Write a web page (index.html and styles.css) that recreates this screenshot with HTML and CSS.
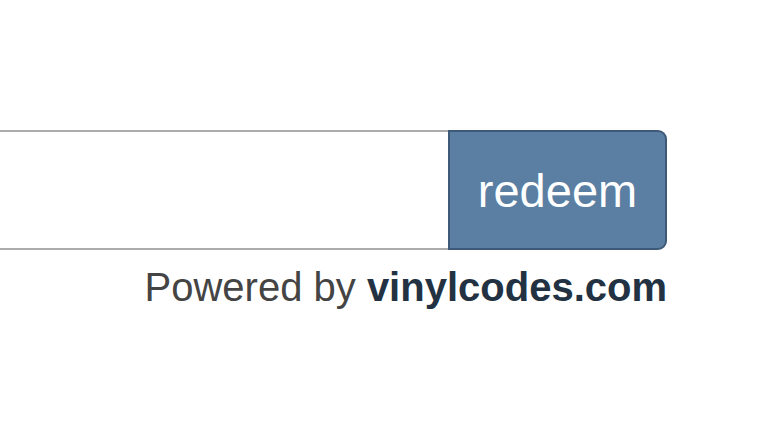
FILE: index.html
```html
<!DOCTYPE html>
<html lang="en">
<head>
    <meta charset="UTF-8">
    <meta name="viewport" content="width=device-width, initial-scale=1.0">
    <title>Redeem</title>
    <link rel="stylesheet" href="styles.css">
</head>
<body>
    <div class="redeem-box">
        <form class="redeem-form">
            <input type="text" class="code-input" name="code">
            <button type="submit" class="redeem-btn">redeem</button>
        </form>
        <p class="powered">Powered by <strong>vinylcodes.com</strong></p>
    </div>
</body>
</html>
```

FILE: styles.css
```css
body {
    margin: 0;
    background-color: #fff;
    font-family: "Liberation Sans", Arial, sans-serif;
}
.redeem-box {
    width: 667px;
    padding-top: 130px;
}
.redeem-form {
    display: flex;
    height: 120px;
    margin: 0;
}
.code-input {
    flex: 1;
    height: 116px;
    margin: 0;
    padding: 0 10px;
    border: 2px solid #acacac;
    border-left: none;
    border-right: none;
    box-sizing: content-box;
    outline: none;
}
.redeem-btn {
    width: 219px;
    height: 120px;
    background-color: #5b7fa3;
    color: #fff;
    border: 2px solid #3f5a78;
    border-radius: 0 9px 9px 0;
    font-family: "Liberation Sans", Arial, sans-serif;
    font-size: 47px;
    padding: 0;
}
.powered {
    margin: 15px 0 0;
    text-align: right;
    font-size: 40px;
    color: #444;
}
.powered strong {
    color: #233242;
}
```
